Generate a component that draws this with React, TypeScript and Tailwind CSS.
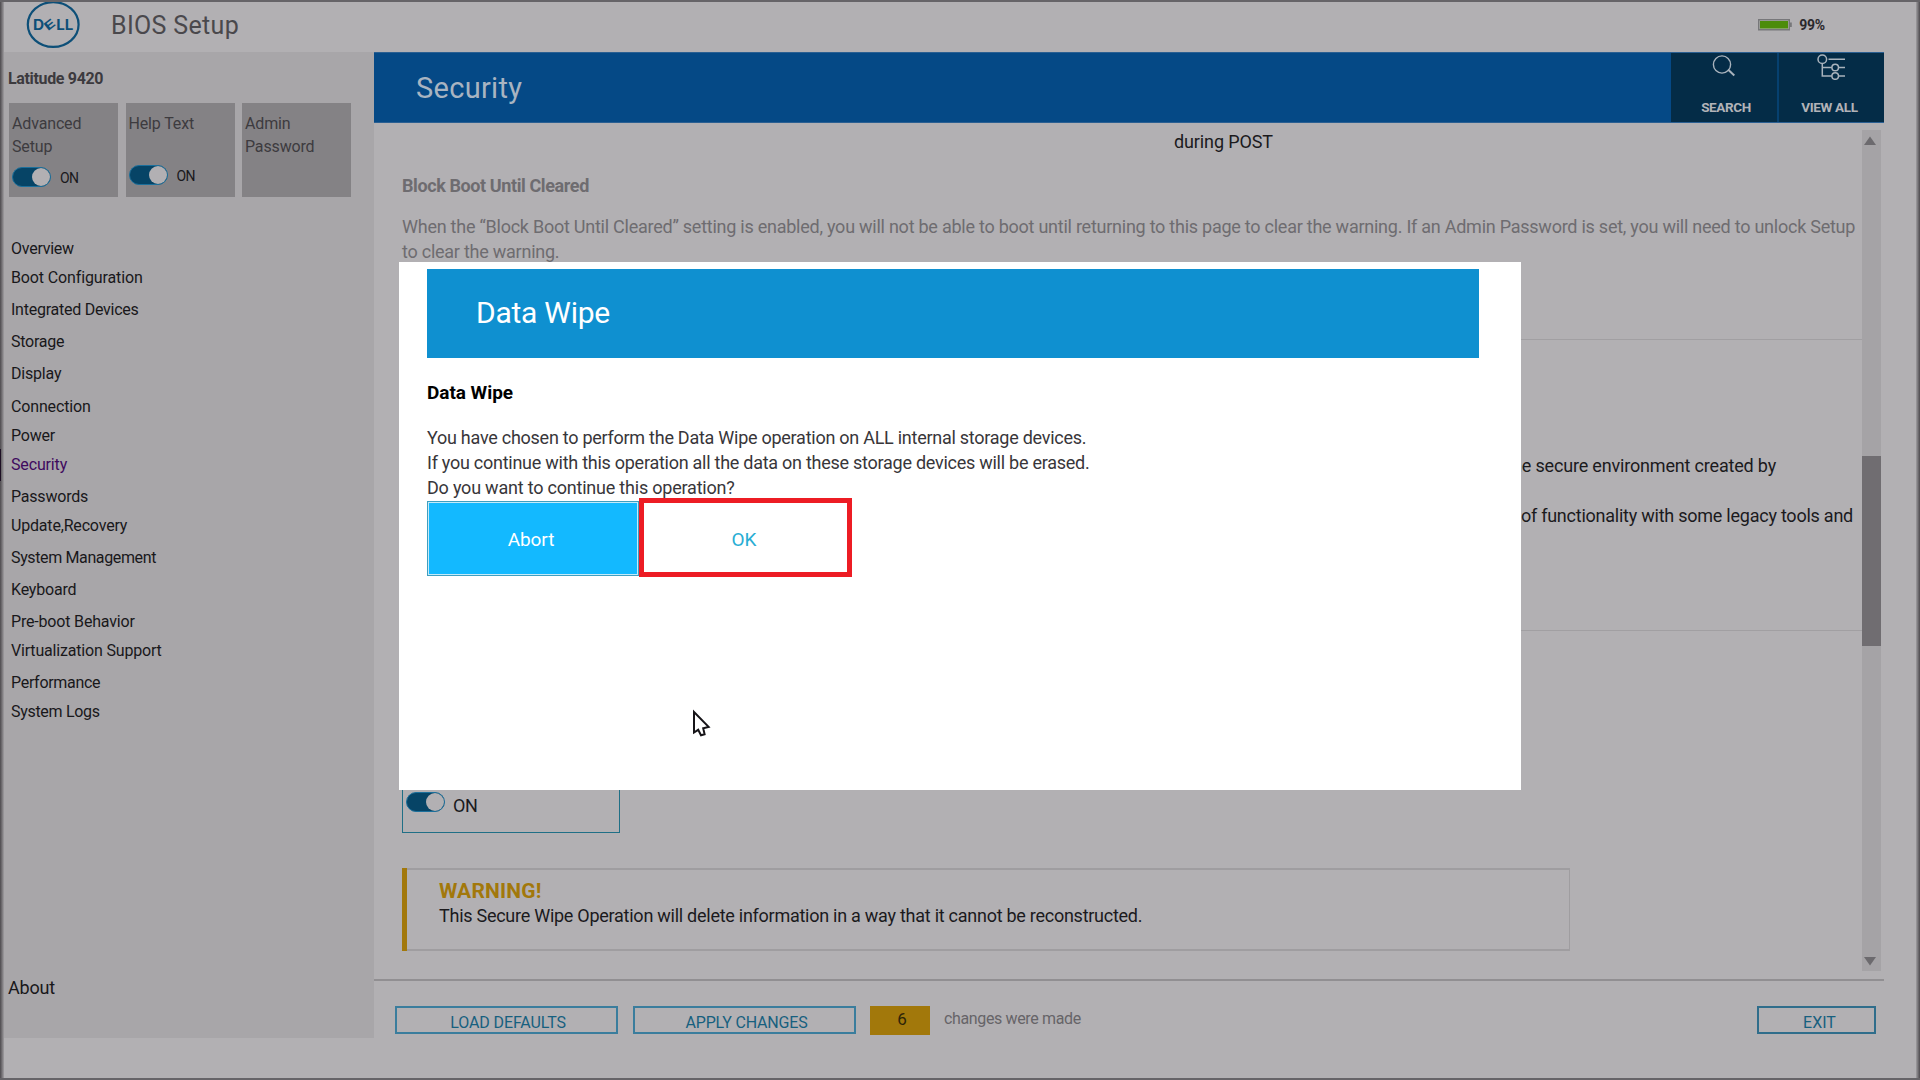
const navItems = [
  { label: "Overview", row: "h-[29px] tracking-[-0.25px]" },
  { label: "Boot Configuration", row: "h-[32px] tracking-[-0.13px]" },
  { label: "Integrated Devices", row: "h-[32px] tracking-[-0.25px]" },
  { label: "Storage", row: "h-[32px] tracking-[-0.25px]" },
  { label: "Display", row: "h-[32.5px] tracking-[-0.2px]" },
  { label: "Connection", row: "h-[29px] tracking-[-0.15px]" },
  { label: "Power", row: "h-[29px] tracking-[-0.2px]" },
  { label: "Security", row: "h-[32px] tracking-[-0.15px] text-[#3f0a5e]" },
  { label: "Passwords", row: "h-[29.5px] tracking-[-0.2px]" },
  { label: "Update,Recovery", row: "h-[32px] tracking-[-0.18px]" },
  { label: "System Management", row: "h-[32px] tracking-[-0.37px]" },
  { label: "Keyboard", row: "h-[32px] tracking-[-0.2px]" },
  { label: "Pre-boot Behavior", row: "h-[29px] tracking-[-0.18px]" },
  { label: "Virtualization Support", row: "h-[32px] tracking-[-0.18px]" },
  { label: "Performance", row: "h-[29px] tracking-[-0.3px]" },
  { label: "System Logs", row: "h-[29px] tracking-[-0.3px]" },
];

function DellLogo() {
  return (
    <svg width="56" height="50" viewBox="0 0 56 50" className="shrink-0">
      <ellipse cx="28.2" cy="24.5" rx="25.4" ry="22.4" fill="none" stroke="#0d4f78" strokeWidth="2.2" />
      <g fill="#0d4f78" fontFamily="Inter, sans-serif" fontWeight="700" fontSize="14">
        <text transform="translate(8 29.8) scale(1.1 1)">D</text>
        <text transform="translate(23 31.2) rotate(-38) scale(1.25 0.85)">E</text>
        <text transform="translate(31.2 29.8) scale(1.08 1)">L</text>
        <text transform="translate(39.8 29.8) scale(1.08 1)">L</text>
      </g>
    </svg>
  );
}

function Toggle({ knob }: { knob: string }) {
  return (
    <span className="flex h-[20px] w-[39px] shrink-0 justify-end rounded-full border border-[#1b6f9b] bg-[#064466]">
      <span className={knob} />
    </span>
  );
}

function Battery() {
  return (
    <svg width="34" height="12" viewBox="0 0 34 12">
      <rect x="0.75" y="0.75" width="30.5" height="10" fill="#b9bdb0" stroke="#77777a" strokeWidth="1.5" />
      <rect x="2" y="2" width="28" height="7.5" fill="#4c8c0a" />
      <rect x="31.8" y="3.5" width="2" height="4.5" fill="#77777a" />
    </svg>
  );
}

function SearchIcon() {
  return (
    <svg width="24" height="22" viewBox="0 0 24 22" fill="none" stroke="#a9b3bd">
      <circle cx="10" cy="9.5" r="8.6" strokeWidth="1.4" />
      <path d="M16 14.5 L22.3 20.4" strokeWidth="2" />
    </svg>
  );
}

function TreeIcon() {
  return (
    <svg width="30" height="27" viewBox="0 0 30 27" fill="none" stroke="#a9b3bd" strokeWidth="1.5">
      <circle cx="6.3" cy="6.3" r="4.3" />
      <path d="M12.5 6.3H29M6.3 10.6V23H15.8M6.3 14.5H15.8M22.6 14.5H29M22.6 23H29" />
      <circle cx="19.2" cy="14.5" r="3.3" />
      <circle cx="19.2" cy="23" r="3.3" />
    </svg>
  );
}

function Sidebar() {
  return (
    <aside className="flex h-[986px] w-[370px] shrink-0 flex-col bg-[#a8a6a9]">
      <h2 className="mt-[17px] ml-[4px] text-[16px] leading-[20px] font-bold tracking-[-0.34px] text-[#3c3a3e]">Latitude 9420</h2>
      <div className="mt-[14px] ml-[5px] flex gap-[7.5px] text-[16px] leading-[23px] tracking-[-0.15px] text-[#3d3b3f]">
        <div className="h-[94px] w-[109px] bg-[#848285] pt-[9px] pl-[3px]">
          <div className="w-[90px]">Advanced Setup</div>
          <div className="mt-[9px] flex">
            <Toggle knob="h-[18px] w-[18px] rounded-full bg-[#b2b0b3]" />
            <span className="ml-[9px] text-[14px] leading-[22px] tracking-[-0.6px] text-[#1a191c]">ON</span>
          </div>
        </div>
        <div className="h-[94px] w-[109px] bg-[#848285] pt-[9px] pl-[3px]">
          <div>Help Text</div>
          <div className="mt-[30px] flex">
            <Toggle knob="h-[18px] w-[18px] rounded-full bg-[#b2b0b3]" />
            <span className="ml-[9px] text-[14px] leading-[22px] tracking-[-0.6px] text-[#1a191c]">ON</span>
          </div>
        </div>
        <div className="h-[94px] w-[109px] bg-[#848285] pt-[9px] pl-[3px]">
          <div className="w-[80px]">Admin Password</div>
        </div>
      </div>
      <nav className="mt-[42px] ml-[7px] flex flex-col text-[16px] leading-[20px] text-[#19181b]">
        {navItems.map((item) => (
          <a key={item.label} className={item.row}>{item.label}</a>
        ))}
      </nav>
      <div className="mt-auto mb-[38px] ml-[4px] text-[18px] leading-[25px] tracking-[-0.2px] text-[#19181b]">About</div>
    </aside>
  );
}

function PageHeader() {
  return (
    <div className="flex h-[71px] w-[1510px] border-y border-[#2a5f92] bg-[#054986]">
      <h1 className="mt-[17px] ml-[42px] flex-1 text-[29px] leading-[36px] tracking-[0.3px] text-[#a9b4c1]">Security</h1>
      <button className="flex w-[106px] flex-col items-center bg-[#042c47] text-[#b2b3b8]">
        <span className="mt-[2px]"><SearchIcon /></span>
        <span className="mt-[22px] ml-[4px] text-[13.5px] leading-[16px] font-bold tracking-[-0.4px]">SEARCH</span>
      </button>
      <div className="w-[2px] bg-[#06406f]" />
      <button className="flex w-[105px] flex-col items-center bg-[#042c47] text-[#b2b3b8]">
        <span className="mr-[2px]"><TreeIcon /></span>
        <span className="mt-[19px] mr-[4px] text-[13.5px] leading-[16px] font-bold tracking-[-0.35px]">VIEW ALL</span>
      </button>
    </div>
  );
}

function Scrollbar() {
  return (
    <div className="mt-[7px] flex h-[841px] w-[19px] flex-col bg-[#a5a3a6]">
      <svg width="19" height="20" viewBox="0 0 19 20"><path d="M2 15h12l-6-8.5z" fill="#6c6a6e" /></svg>
      <div className="mt-[306px] h-[190px] bg-[#706d71]" />
      <svg width="19" height="20" viewBox="0 0 19 20" className="mt-auto"><path d="M2 6h12l-6 8.5z" fill="#6c6a6e" /></svg>
    </div>
  );
}

function Content() {
  return (
    <div className="flex h-[856px]">
      <section className="flex w-[1488px] flex-col pl-[28px] text-[18px] leading-[25px] text-[#1b1a1d]">
        <p className="mt-[6px] ml-[772px] tracking-[-0.12px]">during POST</p>
        <h3 className="mt-[19px] font-bold tracking-[-0.4px] text-[#6e6c70]">Block Boot Until Cleared</h3>
        <p className="mt-[16px] tracking-[-0.246px] whitespace-nowrap text-[#6e6c70]">
          When the “Block Boot Until Cleared” setting is enabled, you will not be able to boot until returning to this page to clear the warning. If an Admin Password is set, you will need to unlock Setup
          <br />
          to clear the warning.
        </p>
        <div className="mt-[75px] h-px bg-[#a19fa2]" />
        <p className="mt-[113px] mr-[86px] text-right tracking-[-0.18px]">the secure environment created by</p>
        <p className="mt-[25px] mr-[9px] text-right tracking-[-0.24px]">of functionality with some legacy tools and</p>
        <div className="mt-[102px] h-px bg-[#a19fa2]" />
        <div className="mt-[109px] flex h-[93px] w-[218px] items-end border border-[#1f6f86] pb-[14px] pl-[3px]">
          <span className="mb-[6px]">
            <Toggle knob="h-[18px] w-[18px] rounded-full bg-[#b2b0b3]" />
          </span>
          <span className="ml-[8px] tracking-[-0.4px]">ON</span>
        </div>
        <div className="mt-[35px] flex h-[83px] w-[1168px]">
          <div className="w-[5px] bg-[#a2780b]" />
          <div className="flex-1 border-y-2 border-r border-[#9f9da0] pt-[7px] pl-[32px]">
            <div className="text-[21px] leading-[28px] font-bold tracking-[0.18px] text-[#a2780b]">WARNING!</div>
            <p className="-mt-[2px] tracking-[-0.26px]">This Secure Wipe Operation will delete information in a way that it cannot be reconstructed.</p>
          </div>
        </div>
      </section>
      <Scrollbar />
    </div>
  );
}

function Footer() {
  return (
    <footer className="flex w-[1510px] items-start border-t-2 border-[#918f92] pt-[25px] text-[16px] leading-[20px] text-[#17607f]">
      <button className="ml-[21px] h-[28px] w-[223px] border-2 border-[#3a7d9d] pt-[5px] leading-[20px] tracking-[-0.1px]">
        <span className="ml-[3px]">LOAD DEFAULTS</span>
      </button>
      <button className="ml-[15px] h-[28px] w-[223px] border-2 border-[#3a7d9d] pt-[5px] leading-[20px] tracking-[-0.17px]">
        <span className="ml-[4px]">APPLY CHANGES</span>
      </button>
      <div className="ml-[14px] h-[29px] w-[60px] bg-[#a2780b] pt-[3px] pl-[4px] text-center text-[17px] text-[#2e2408]">6</div>
      <span className="mt-[3px] ml-[14px] tracking-[-0.36px] text-[#666468]">changes were made</span>
      <button className="mr-[8px] ml-auto h-[28px] w-[119px] border-2 border-[#2f6d8b] pt-[5px] leading-[20px]">
        <span className="ml-[6px]">EXIT</span>
      </button>
    </footer>
  );
}

function DataWipeDialog() {
  return (
    <div className="absolute top-[262px] left-[399px] h-[528px] w-[1122px] bg-white pt-[7px] pl-[28px]">
      <div className="h-[89px] w-[1052px] bg-[#0f90d0] pt-[24px] pl-[49px] text-[30px] leading-[40px] tracking-[-0.25px] text-white">Data Wipe</div>
      <h3 className="mt-[22px] text-[19px] leading-[26px] font-bold tracking-[-0.05px] text-black">Data Wipe</h3>
      <p className="mt-[19px] text-[18px] leading-[25px] tracking-[-0.26px] whitespace-nowrap text-[#38363a]">
        You have chosen to perform the Data Wipe operation on ALL internal storage devices.
        <br />
        If you continue with this operation all the data on these storage devices will be erased.
        <br />
        <span className="tracking-[-0.21px]">Do you want to continue this operation?</span>
      </p>
      <div className="flex text-[19px]">
        <button className="mt-[1px] h-[75px] w-[212px] border border-[#3f9fc0] bg-[#c4ebfa] p-px text-white">
          <span className="flex h-full w-full items-center justify-center bg-[#13b9ff] pt-[4px] pr-[4px] tracking-[-0.1px]">Abort</span>
        </button>
        <button className="-mt-[2px] h-[79px] w-[213px] border-[5px] border-[#ed1c24] bg-white pt-[6px] pr-[3px] text-[#29add4]">OK</button>
      </div>
    </div>
  );
}

function Cursor() {
  return (
    <svg className="absolute top-[708px] left-[692px]" width="20" height="30" viewBox="0 0 20 30">
      <path d="M2 4V24.5L6.2 21.8L9 27.2L12.6 26.2L11.2 20.2L16.6 18.9Z" fill="#fff" stroke="#161418" strokeWidth="2" />
    </svg>
  );
}

export default function App() {
  return (
    <div className="relative flex h-[1080px] w-[1920px] flex-col overflow-hidden border-y-2 border-[#666468] bg-[#b2b0b3] font-['Roboto',sans-serif]">
      <header className="flex h-[50px] shrink-0 items-start">
        <div className="-mt-[2px] ml-[25px]"><DellLogo /></div>
        <div className="mt-[9px] ml-[30px] text-[25px] leading-[30px] tracking-[0.33px] text-[#4a484c]">BIOS Setup</div>
        <div className="mt-[13px] mr-[95px] ml-auto flex items-start">
          <span className="mt-[4px]"><Battery /></span>
          <span className="ml-[7px] text-[14px] leading-[20px] font-bold tracking-[-0.2px] text-[#2b292d]">99%</span>
        </div>
      </header>
      <div className="flex pl-[4px]">
        <Sidebar />
        <main className="flex flex-col">
          <PageHeader />
          <Content />
          <Footer />
        </main>
      </div>
      <div className="absolute -top-[2px] left-0 h-[1080px] w-[4px] bg-gradient-to-r from-[#4d4a4e] to-[#a09ea1]" />
      <div className="absolute top-[447px] left-0 h-[32px] w-px bg-[#1d0f24]" />
      <div className="absolute -top-[2px] right-0 h-[1080px] w-[4px] bg-gradient-to-l from-[#4d4a4e] to-[#a09ea1]" />
      <div className="absolute -inset-y-[2px] left-0 w-full">
        <DataWipeDialog />
        <Cursor />
      </div>
    </div>
  );
}
